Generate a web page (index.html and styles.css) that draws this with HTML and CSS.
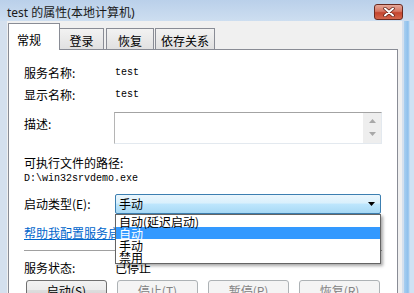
FILE: index.html
```html
<!DOCTYPE html>
<html lang="zh-CN">
<head>
    <meta charset="UTF-8">
    <meta name="viewport" content="width=device-width, initial-scale=1.0">
    <title>test 的属性(本地计算机)</title>
    <link rel="stylesheet" href="styles.css">
</head>
<body>
    <div class="window">
        <div class="titlebar">
            <span class="title">test 的属性(本地计算机)</span>
            <span class="close-btn">
                <svg width="14" height="10" viewBox="0 0 14 10">
                    <path d="M3 1.5 L11 8.5 M11 1.5 L3 8.5" stroke="#5a1a10" stroke-width="3.4" stroke-linecap="round"/>
                    <path d="M3 1.5 L11 8.5 M11 1.5 L3 8.5" stroke="#fff" stroke-width="2" stroke-linecap="round"/>
                </svg>
            </span>
        </div>
        <div class="frame">
            <div class="dialog">
                <div class="tabs">
                    <div class="tab active">常规</div>
                    <div class="tab t-logon">登录</div>
                    <div class="tab t-recover">恢复</div>
                    <div class="tab t-deps">依存关系</div>
                </div>
                <div class="panel">
                    <div class="row">
                        <span class="label">服务名称:</span>
                        <span class="mono">test</span>
                    </div>
                    <div class="row r-display">
                        <span class="label">显示名称:</span>
                        <span class="mono">test</span>
                    </div>
                    <div class="row r-desc">
                        <span class="label">描述:</span>
                        <div class="textbox">
                            <div class="textbox-text"></div>
                            <div class="scroll">
                                <svg width="7" height="4" viewBox="0 0 7 4"><path d="M0 4 L3.5 0 L7 4 Z" fill="#a8a8a8"/></svg>
                                <svg width="7" height="4" viewBox="0 0 7 4"><path d="M0 0 L3.5 4 L7 0 Z" fill="#a8a8a8"/></svg>
                            </div>
                        </div>
                    </div>
                    <div class="row r-pathlabel">
                        <span>可执行文件的路径:</span>
                    </div>
                    <div class="row r-path">
                        <span class="mono">D:\win32srvdemo.exe</span>
                    </div>
                    <div class="row r-startup">
                        <span class="label">启动类型(E):</span>
                        <div class="combo">
                            <span class="combo-text">手动</span>
                            <svg class="combo-arrow" width="7" height="4" viewBox="0 0 7 4"><path d="M0 0 L7 0 L3.5 4 Z" fill="#000"/></svg>
                            <ul class="dropdown">
                                <li>自动(延迟启动)</li>
                                <li class="selected">自动</li>
                                <li>手动</li>
                                <li>禁用</li>
                            </ul>
                        </div>
                    </div>
                    <div class="row r-link">
                        <a class="help-link" href="#">帮助我配置服务启动选项。</a>
                    </div>
                    <div class="separator"></div>
                    <div class="row r-status">
                        <span class="label">服务状态:</span>
                        <span>已停止</span>
                    </div>
                    <div class="buttons">
                        <button>启动(S)</button>
                        <button disabled>停止(T)</button>
                        <button disabled>暂停(P)</button>
                        <button disabled>恢复(R)</button>
                    </div>
                </div>
            </div>
        </div>
    </div>
</body>
</html>
```

FILE: styles.css
```css
* {
    box-sizing: border-box;
}
body {
    margin: 0;
    width: 414px;
    height: 293px;
    overflow: hidden;
    background: #d6e3f1;
    font-family: "Noto Sans CJK SC", "Noto Sans", sans-serif;
    font-size: 12px;
    color: #000;
}
.window {
    display: flex;
    flex-direction: column;
    height: 293px;
}
.titlebar {
    height: 22px;
    display: flex;
    align-items: flex-start;
    justify-content: space-between;
    padding: 0 11px 0 7px;
    background: linear-gradient(#bad0ea, #cddef0);
}
.title {
    font-family: "Noto Sans", "Noto Sans CJK SC", sans-serif;
    font-size: 12px;
    line-height: 16px;
    margin-top: 5px;
    color: #1a1a1a;
}
.close-btn {
    width: 29px;
    height: 16px;
    margin-top: 4px;
    display: flex;
    align-items: center;
    justify-content: center;
    border: 1px solid #6a2a20;
    border-radius: 3px;
    background: linear-gradient(#e6a899 0, #d67663 45%, #c4452e 55%, #d4664c 100%);
}
.frame {
    flex: 1;
    display: flex;
    padding: 0 12px 0 7px;
    background: linear-gradient(90deg, #d4e0ee 0, #d4e0ee calc(100% - 10px), #a9cff0 calc(100% - 10px), #8ec0ec calc(100% - 6px), #cfe2f4 calc(100% - 4px));
}
.dialog {
    flex: 1;
    display: flex;
    flex-direction: column;
    background: #f0f0f0;
    padding: 2px 4px 0 1px;
}
.tabs {
    height: 26px;
    display: flex;
    align-items: flex-end;
}
.tab {
    height: 21px;
    line-height: 24px;
    border: 1px solid #898c95;
    border-bottom: none;
    background: linear-gradient(#f2f2f2, #e1e1e1);
    text-align: center;
}
.tab.active {
    position: relative;
    z-index: 1;
    height: 27px;
    width: 52px;
    margin-bottom: -1px;
    line-height: 32px;
    padding-right: 10px;
    background: #fff;
}
.t-logon {
    width: 44px;
    border-left: none;
}
.t-recover {
    width: 48px;
    margin-left: 2px;
}
.t-deps {
    width: 60px;
    margin-left: 1px;
}
.panel {
    flex: 1;
    border: 1px solid #898c95;
    background: #fff;
    padding: 15px 15px 0 15px;
}
.row {
    display: flex;
    align-items: center;
    height: 16px;
    line-height: 16px;
    white-space: nowrap;
}
.label {
    width: 91px;
    flex: none;
}
.mono {
    font-family: "Liberation Mono", monospace;
    font-size: 10px;
}
.r-display {
    margin-top: 6px;
}
.r-desc {
    height: 32px;
    margin-top: 9px;
    align-items: flex-start;
}
.r-desc .label {
    padding-top: 4px;
}
.textbox {
    flex: 1;
    height: 32px;
    margin-left: -1px;
    display: flex;
    border: 1px solid;
    border-color: #a3a3a3 #e3e9ef #e3e9ef #b5b5b5;
}
.textbox-text {
    flex: 1;
}
.scroll {
    width: 18px;
    background: #eeeeee;
    display: flex;
    flex-direction: column;
    align-items: center;
    justify-content: space-between;
    padding: 6px 0 7px;
}
.r-pathlabel {
    margin-top: 11px;
}
.r-path {
    height: 14px;
    margin-top: 1px;
}
.r-startup {
    height: 20px;
    margin-top: 8px;
}
.combo {
    position: relative;
    flex: 1;
    height: 20px;
    margin-right: 1px;
    display: flex;
    align-items: center;
    justify-content: space-between;
    padding: 0 5px 0 3px;
    border: 1px solid #3c7fb1;
    border-radius: 2px;
    background: linear-gradient(#eaf6fd 0, #d9f0fc 45%, #bee6fd 50%, #a7d9f5 100%);
}
.combo-text {
    line-height: 18px;
}
.dropdown {
    position: absolute;
    z-index: 2;
    top: 19px;
    left: -1px;
    right: -1px;
    margin: 0;
    padding: 0;
    list-style: none;
    background: #fff;
    border: 1px solid #646464;
    box-shadow: 2px 2px 3px rgba(0, 0, 0, 0.35);
}
.dropdown li {
    height: 12px;
    line-height: 13px;
    padding-left: 3px;
}
.dropdown li.selected {
    background: #3399ff;
    color: #fff;
}
.r-link {
    margin-top: 11px;
}
.help-link {
    color: #0066cc;
    text-decoration: underline;
}
.separator {
    margin-top: 9px;
    height: 2px;
    border-top: 1px solid #a0a0a0;
    border-bottom: 1px solid #fff;
}
.r-status {
    margin-top: 8px;
}
.buttons {
    display: flex;
    justify-content: space-between;
    margin: 4px 2px 0;
}
button {
    width: 81px;
    height: 21px;
    padding: 0;
    font-family: "Noto Sans CJK SC", "Noto Sans", sans-serif;
    font-size: 12px;
    line-height: 18px;
    color: #000;
    border: 1px solid #707070;
    border-radius: 3px;
    background: linear-gradient(#f2f2f2 0, #ebebeb 50%, #dddddd 50%, #cfcfcf 100%);
}
button:disabled {
    color: #838383;
    border-color: #adb2b5;
    background: #f4f4f4;
}
```
